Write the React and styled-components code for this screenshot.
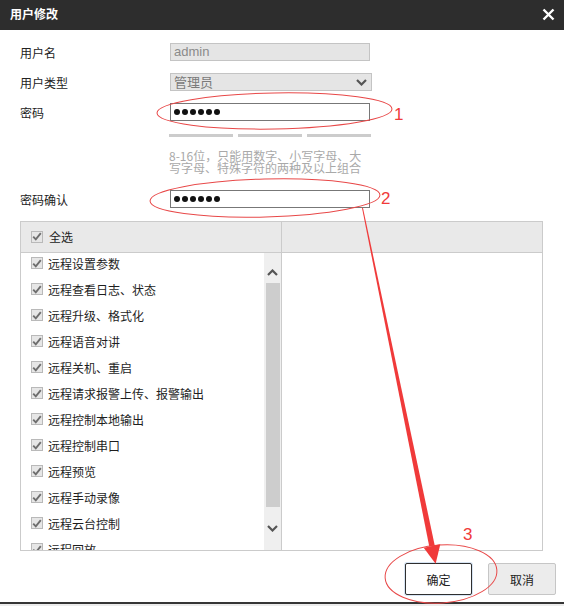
import React from "react";
import styled, { createGlobalStyle } from "styled-components";

const Global = createGlobalStyle`
  html, body { margin: 0; padding: 0; background: #fff; }
  body {
    font-family: "Noto Sans CJK SC", "Microsoft YaHei", sans-serif;
    font-size: 12px;
    color: #222;
  }
  * { box-sizing: border-box; }
`;

const Dialog = styled.div`
  position: relative;
  width: 564px;
  height: 606px;
  display: flex;
  flex-direction: column;
  background: #fff;
  overflow: hidden;
`;

const TitleBar = styled.header`
  height: 30px;
  flex: none;
  background: #2d2d2d;
  display: flex;
  align-items: center;
  justify-content: space-between;
  padding: 0 9px 2px 10px;
`;

const Title = styled.h1`
  margin: 0;
  font-size: 12px;
  font-weight: 700;
  line-height: 14px;
  color: #fff;
`;

const CloseButton = styled.button`
  border: 0;
  padding: 0;
  background: transparent;
  width: 13px;
  height: 13px;
  display: flex;
  svg { display: block; }
`;

const Form = styled.div`
  padding: 7px 0 0 20px;
  display: flex;
  flex-direction: column;
`;

const Row = styled.div`
  height: 30px;
  margin-top: ${(p) => p.$gap || 0}px;
  display: grid;
  grid-template-columns: 150px 202px;
  align-items: center;
`;

const Label = styled.span`
  font-size: 12px;
  color: #222;
`;

const Field = styled.div`
  width: ${(p) => (p.$wide ? 202 : 200)}px;
  height: 18px;
  border: 1px solid ${(p) => (p.$readonly ? "#c4c4c4" : "#777")};
  background: ${(p) => (p.$readonly ? "#e5e5e5" : "#fff")};
  display: flex;
  align-items: center;
  justify-content: space-between;
  padding: 0 4px 0 3px;
  font-size: 13px;
  color: #8a8a8a;
`;

const Latin = styled.span`
  font-family: "Liberation Sans", Arial, sans-serif;
  font-size: 13px;
  line-height: 16px;
`;

const SelectText = styled.span`
  font-size: 13px;
  line-height: 16px;
  color: #7a7a7a;
`;

const Dots = styled.div`
  display: flex;
  gap: 2px;
`;

const Dot = styled.span`
  width: 6px;
  height: 6px;
  border-radius: 50%;
  background: #111;
`;

const Strength = styled.div`
  margin: 7px 0 0 149px;
  display: flex;
  gap: 5px;
`;

const StrengthBar = styled.span`
  width: 64px;
  height: 3px;
  background: #cccccc;
`;

const Hint = styled.p`
  margin: 13px 0 0 149px;
  width: 196px;
  font-size: 12px;
  line-height: 12px;
  color: #a9a9a9;
`;

const Panel = styled.div`
  margin-top: 7px;
  width: 523px;
  height: 330px;
  flex: none;
  border: 1px solid #cbcbcb;
  display: grid;
  grid-template-columns: 261px 1fr;
  grid-template-rows: 31px 1fr;
  overflow: hidden;
`;

const HeadCell = styled.div`
  background: #e9e9e9;
  border-bottom: 1px solid #cbcbcb;
  border-right: ${(p) => (p.$divider ? "1px solid #cbcbcb" : "0")};
  display: flex;
  align-items: center;
  gap: 6px;
  padding: 0 0 1px 10px;
`;

const BodyCell = styled.div`
  display: flex;
  min-height: 0;
  overflow: hidden;
  border-right: ${(p) => (p.$divider ? "1px solid #cbcbcb" : "0")};
`;

const List = styled.ul`
  list-style: none;
  margin: 0;
  padding: 0 0 0 10px;
  flex: 1;
  overflow: hidden;
`;

const Item = styled.li`
  height: 26px;
  padding-bottom: 6px;
  display: flex;
  align-items: center;
  gap: 5px;
  font-size: 12px;
  color: #1e1e1e;
  white-space: nowrap;
`;

const Box = styled.span`
  width: 12px;
  height: 12px;
  flex: none;
  border: 1px solid #b9b9b9;
  background: #e6e6e6;
  display: flex;
  align-items: center;
  justify-content: center;
  svg { display: block; }
`;

const Scrollbar = styled.div`
  width: 17px;
  flex: none;
  background: #efefef;
  display: flex;
  flex-direction: column;
  align-items: center;
  padding-top: 9px;
`;

const ArrowBtn = styled.div`
  width: 100%;
  height: 21px;
  flex: ${(p) => (p.$grow ? 1 : "none")};
  display: flex;
  align-items: center;
  justify-content: center;
`;

const Thumb = styled.div`
  width: 14px;
  height: 224px;
  flex: none;
  background: #cdcdcd;
`;

const Footer = styled.div`
  margin-top: 12px;
  padding-right: 8px;
  display: flex;
  justify-content: flex-end;
  gap: 16px;
`;

const Button = styled.button`
  width: ${(p) => (p.$primary ? 67 : 68)}px;
  height: 32px;
  border-radius: 2px;
  font-family: "Noto Sans CJK SC", sans-serif;
  font-size: 12px;
  color: #222;
  border: 1px solid ${(p) => (p.$primary ? "#2f2f2f" : "#c6c6c6")};
  background: ${(p) => (p.$primary ? "#fff" : "#ececec")};
  box-shadow: ${(p) => (p.$primary ? "0 0 0 1px #d7e4f3" : "none")};
  padding: 0;
`;

const BottomEdge = styled.div`
  margin-top: auto;
  height: 4px;
  flex: none;
  border-top: 2px solid #353535;
  background: #ececec;
`;

const Overlay = styled.svg`
  position: absolute;
  left: 0;
  top: 0;
  pointer-events: none;
`;

const Check = () => (
  <svg width="10" height="9" viewBox="0 0 10 9">
    <path d="M1.2 4.6 L3.8 7.3 L8.8 1.2" fill="none" stroke="#6e6e6e" strokeWidth="1.9" />
  </svg>
);

const Chevron = ({ up }) => (
  <svg width="11" height="7" viewBox="0 0 11 7">
    <path
      d={up ? "M1 6 L5.5 1.5 L10 6" : "M1 1 L5.5 5.5 L10 1"}
      fill="none"
      stroke="#555"
      strokeWidth="2.2"
    />
  </svg>
);

const items = [
  "远程设置参数",
  "远程查看日志、状态",
  "远程升级、格式化",
  "远程语音对讲",
  "远程关机、重启",
  "远程请求报警上传、报警输出",
  "远程控制本地输出",
  "远程控制串口",
  "远程预览",
  "远程手动录像",
  "远程云台控制",
  "远程回放",
];

const Password = () => (
  <Field>
    <Dots>
      {[0, 1, 2, 3, 4, 5].map((i) => (
        <Dot key={i} />
      ))}
    </Dots>
  </Field>
);

export default function App() {
  const sx = 362.5, sy = 208, ex = 432, ey = 546;
  const len = Math.hypot(ex - sx, ey - sy);
  const dx = (ex - sx) / len, dy = (ey - sy) / len;
  const px = dy, py = -dx;
  const w0 = 0.5, w1 = 2.8;
  const shaft = [
    [sx + px * w0, sy + py * w0],
    [ex + px * w1, ey + py * w1],
    [ex - px * w1, ey - py * w1],
    [sx - px * w0, sy - py * w0],
  ]
    .map((p) => p.join(","))
    .join(" ");
  const hw = 8.5;
  const head = [
    [ex + px * hw, ey + py * hw],
    [ex + dx * 18, ey + dy * 18],
    [ex - px * hw, ey - py * hw],
  ]
    .map((p) => p.join(","))
    .join(" ");

  return (
    <Dialog>
      <Global />
      <TitleBar>
        <Title>用户修改</Title>
        <CloseButton aria-label="关闭">
          <svg width="13" height="13" viewBox="0 0 13 13">
            <path d="M1.5 1.5 L11.5 11.5 M11.5 1.5 L1.5 11.5" stroke="#fff" strokeWidth="2.4" />
          </svg>
        </CloseButton>
      </TitleBar>

      <Form>
        <Row>
          <Label>用户名</Label>
          <Field $readonly>
            <Latin>admin</Latin>
          </Field>
        </Row>
        <Row>
          <Label>用户类型</Label>
          <Field $readonly $wide>
            <SelectText>管理员</SelectText>
            <Chevron />
          </Field>
        </Row>
        <Row>
          <Label>密码</Label>
          <Password />
        </Row>
        <Strength>
          <StrengthBar />
          <StrengthBar />
          <StrengthBar />
        </Strength>
        <Hint>8-16位，只能用数字、小写字母、大写字母、特殊字符的两种及以上组合</Hint>
        <Row $gap={10}>
          <Label>密码确认</Label>
          <Password />
        </Row>

        <Panel>
          <HeadCell $divider>
            <Box>
              <Check />
            </Box>
            <span>全选</span>
          </HeadCell>
          <HeadCell />
          <BodyCell $divider>
            <List>
              {items.map((t) => (
                <Item key={t}>
                  <Box>
                    <Check />
                  </Box>
                  <span>{t}</span>
                </Item>
              ))}
            </List>
            <Scrollbar>
              <ArrowBtn>
                <Chevron up />
              </ArrowBtn>
              <Thumb />
              <ArrowBtn $grow>
                <Chevron />
              </ArrowBtn>
            </Scrollbar>
          </BodyCell>
          <BodyCell />
        </Panel>
      </Form>

      <Footer>
        <Button $primary>确定</Button>
        <Button>取消</Button>
      </Footer>
      <BottomEdge />

      <Overlay width="564" height="606" viewBox="0 0 564 606">
        <g fill="none" stroke="#e84848" strokeWidth="1">
          <ellipse cx="274.5" cy="111" rx="117.5" ry="18" transform="rotate(-1 274.5 111)" />
          <ellipse cx="265" cy="198" rx="115" ry="19" transform="rotate(-1.5 265 198)" />
          <ellipse cx="441" cy="574" rx="56" ry="29" transform="rotate(-4 441 574)" />
        </g>
        <polygon points={shaft} fill="#f03a3a" />
        <polygon points={head} fill="#f03a3a" />
        <g fill="#f03a3a" fontFamily="Liberation Sans, sans-serif" fontSize="17">
          <text x="394" y="120">1</text>
          <text x="381" y="204">2</text>
          <text x="463" y="540">3</text>
        </g>
      </Overlay>
    </Dialog>
  );
}
